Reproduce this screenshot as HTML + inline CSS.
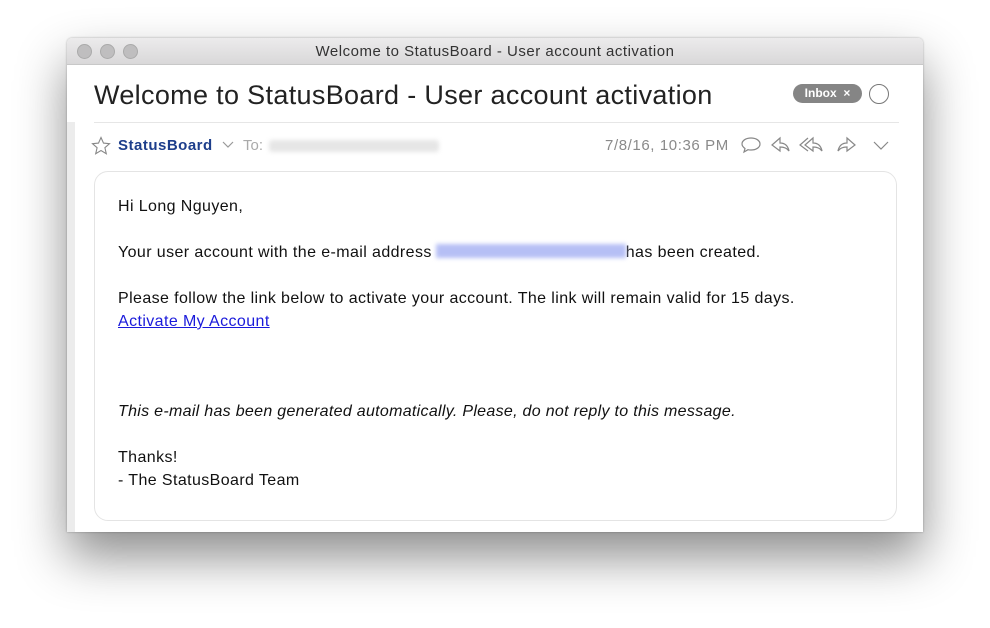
<!DOCTYPE html>
<html><head><style>
body{margin:0;width:990px;height:628px;background:#fff;position:relative;overflow:hidden;font-family:"Liberation Sans",sans-serif;}
.win{position:absolute;left:67px;top:38px;width:856px;height:494px;background:#fff;box-shadow:0 25px 50px rgba(0,0,0,0.45),0 0 2px rgba(0,0,0,0.3);border-radius:5px 5px 0 0;overflow:hidden}
.tb{height:26px;background:linear-gradient(#ecebec,#d9d8d9);border-bottom:1px solid #c8c8c8;text-align:center;font-size:15px;letter-spacing:0.5px;line-height:27px;color:#333}
.dot{position:absolute;top:6px;width:13px;height:13px;border-radius:50%;background:#bfbebf;border:0.5px solid #aaa}
.strip{position:absolute;left:0;top:84px;width:8px;height:410px;background:#ececec}
.subj{position:absolute;left:27px;top:42px;font-size:27px;letter-spacing:0.33px;color:#222}
.hr{position:absolute;left:27px;top:84px;width:805px;height:1px;background:#e6e6e6}
.badge{position:absolute;left:726px;top:46px;width:69px;height:19px;border-radius:10px;background:#858585;color:#fff;font-size:12px;font-weight:bold;line-height:19px;text-align:center}
.circ{position:absolute;left:802px;top:46px;width:18px;height:18px;border:1px solid #777;border-radius:50%}
.from{position:absolute;left:51px;top:99px;font-size:15px;letter-spacing:0.5px;font-weight:bold;color:#1d3e8b}
.to{position:absolute;left:176px;top:99px;font-size:15px;color:#aaa}
.blur{position:absolute;background:#e6e6e6;filter:blur(2px);border-radius:3px}
.date{position:absolute;left:538px;top:99px;font-size:15px;letter-spacing:0.6px;color:#8a8a8a}
.card{position:absolute;left:27px;top:133px;width:801px;height:348px;border:1px solid #e4e4e4;border-radius:14px}
.txt{position:absolute;left:51px;font-size:16px;letter-spacing:0.4px;color:#111}
a{color:#1a1adb}
</style></head><body>
<div class="win">
<div class="tb">Welcome to StatusBoard - User account activation</div>
<div class="dot" style="left:10px"></div><div class="dot" style="left:33px"></div><div class="dot" style="left:56px"></div>
<div class="strip"></div>
<div class="subj">Welcome to StatusBoard - User account activation</div>
<div class="badge">Inbox &nbsp;×</div><div class="circ"></div>
<div class="hr"></div>
<svg style="position:absolute;left:24px;top:98px" width="20" height="20" viewBox="0 0 20 20"><path d="M10 1.5l2.5 5.6 6 .6-4.6 4 1.4 6-5.3-3.2-5.3 3.2 1.4-6-4.6-4 6-.6z" fill="none" stroke="#888" stroke-width="1.1"/></svg>
<div class="from">StatusBoard</div>
<svg style="position:absolute;left:155px;top:103px" width="12" height="8"><path d="M1 1l5 5 5-5" fill="none" stroke="#999" stroke-width="1.2"/></svg>
<div class="to">To:</div>
<div class="blur" style="left:202px;top:102px;width:170px;height:12px"></div>
<div class="date">7/8/16, 10:36 PM</div>
<svg style="position:absolute;left:673px;top:97px" width="160" height="20" viewBox="0 0 160 20" fill="none" stroke="#888" stroke-width="1.2">
<path d="M11 3c5 0 9 2.5 9 6s-4 6-9 6c-1 0-2 0-3-.3L4 17l1-3.5C3 12 2 10.5 2 9c0-3.5 4-6 9-6z"/>
<path d="M40 3l-8 7 8 6v-4c4 0 7 1 9 4-1-5-4-8-9-8z"/>
<path d="M68 3l-8 7 8 6M73 3l-8 7 8 6v-4c4 0 7 1 9 4-1-5-4-8-9-8z"/>
<path d="M107 3l8 7-8 6v-4c-4 0-7 1-9 4 1-5 4-8 9-8z"/>
<path d="M134 7l7 7 7-7"/>
</svg>
<div class="card"></div>
<div class="txt" style="top:160px">Hi Long Nguyen,</div>
<div class="txt" style="top:206px">Your user account with the e-mail address<span style="display:inline-block;width:190px;height:14px;margin-left:4px;background:#b6bff5;filter:blur(2px);vertical-align:-1px"></span>has been created.</div>
<div class="txt" style="top:252px">Please follow the link below to activate your account. The link will remain valid for 15 days.</div>
<div class="txt" style="top:275px"><a href="#">Activate My Account</a></div>
<div class="txt" style="top:365px;font-style:italic;letter-spacing:0.3px">This e-mail has been generated automatically. Please, do not reply to this message.</div>
<div class="txt" style="top:411px">Thanks!</div>
<div class="txt" style="top:434px">- The StatusBoard Team</div>
</div>
</body></html>
